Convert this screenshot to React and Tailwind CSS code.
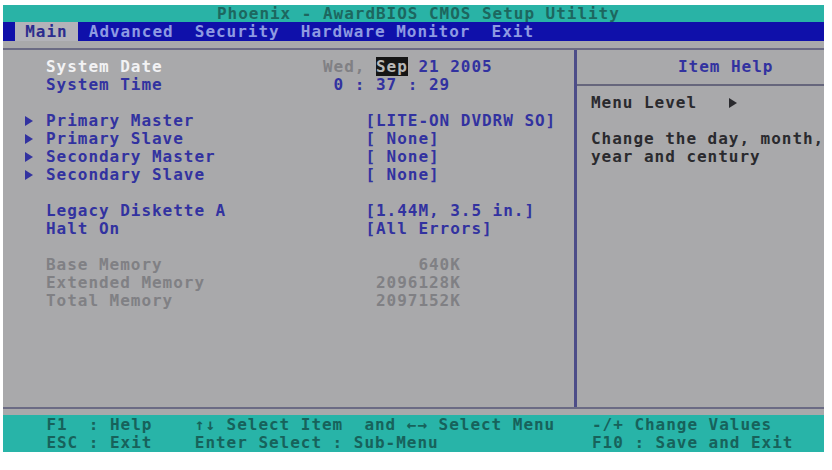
const MONO = "font-['DejaVu_Sans_Mono',monospace] font-bold text-[16px] tracking-[0.967px] leading-[18px] whitespace-pre"

const BLUE = 'text-[#3232a0]'
const GRAY = 'text-[#808084]'

function Tri({ className = 'fill-[#3232a0]' }) {
  return (
    <svg width="8" height="10" viewBox="0 0 8 10" className={className}>
      <polygon points="0,0 8,5 0,10" />
    </svg>
  )
}

function Row({ arrow, label, labelClass = BLUE, children }) {
  return (
    <div className={`flex h-[18px] items-center ${MONO}`}>
      <div className="w-[43px] pl-[22px] flex items-center">{arrow && <Tri />}</div>
      <div className={`w-[277px] ${labelClass}`}>{label}</div>
      <div>{children}</div>
    </div>
  )
}

const Gap = () => <div className="h-[18px]" />

export default function App() {
  return (
    <div className="w-[832px] h-[470px] bg-white overflow-hidden">
      <div className="ml-[3px] mt-[5px] w-[821px] h-[447px] flex flex-col bg-[#a9a9ab]">
        {/* title */}
        <div className={`h-[17px] bg-[#29b3a6] text-[#1d675f] flex items-center ${MONO}`}>
          <span className="pl-[2px] leading-[17px]">{'                    Phoenix - AwardBIOS CMOS Setup Utility'}</span>
        </div>

        {/* menu */}
        <div className={`h-[19px] bg-[#0f10aa] text-[#8e9ae2] flex items-center ${MONO}`}>
          <span className="pl-[1px]">{' '}</span>
          <span className="bg-[#b3b3b9] text-[#2c2c8e] leading-[19px]">{' Main '}</span>
          <span>{' Advanced  Security  Hardware Monitor  Exit'}</span>
        </div>

        <div className="h-[7px]" />

        {/* main box */}
        <div className="h-[361px] border-y-2 border-[#6b6b84] flex">
          <div className="w-[571px] pt-[8px]">
            <Row label="System Date" labelClass="text-[#f2f2f4]">
              <span className={GRAY}>{'Wed, '}</span>
              <span className="bg-[#161616] text-[#b8b8b8]">Sep</span>
              <span className={BLUE}>{' 21 2005'}</span>
            </Row>
            <Row label="System Time">
              <span className={BLUE}>{' 0 : 37 : 29'}</span>
            </Row>
            <Gap />
            <Row arrow label="Primary Master">
              <span className={BLUE}>{'    [LITE-ON DVDRW SO]'}</span>
            </Row>
            <Row arrow label="Primary Slave">
              <span className={BLUE}>{'    [ None]'}</span>
            </Row>
            <Row arrow label="Secondary Master">
              <span className={BLUE}>{'    [ None]'}</span>
            </Row>
            <Row arrow label="Secondary Slave">
              <span className={BLUE}>{'    [ None]'}</span>
            </Row>
            <Gap />
            <Row label="Legacy Diskette A">
              <span className={BLUE}>{'    [1.44M, 3.5 in.]'}</span>
            </Row>
            <Row label="Halt On">
              <span className={BLUE}>{'    [All Errors]'}</span>
            </Row>
            <Gap />
            <Row label="Base Memory" labelClass={GRAY}>
              <span className={GRAY}>{'         640K'}</span>
            </Row>
            <Row label="Extended Memory" labelClass={GRAY}>
              <span className={GRAY}>{'     2096128K'}</span>
            </Row>
            <Row label="Total Memory" labelClass={GRAY}>
              <span className={GRAY}>{'     2097152K'}</span>
            </Row>
          </div>

          <div className="w-[3px] bg-[#4d4d88]" />

          {/* help */}
          <div className={`flex-1 pt-[8px] overflow-hidden ${MONO}`}>
            <div className={`h-[18px] pl-[101px] ${BLUE}`}>Item Help</div>
            <div className="h-[18px] flex items-center">
              <div className="w-full h-[2px] bg-[#66667c]" />
            </div>
            <div className="h-[18px] pl-[14px] flex items-center text-[#2a2a2e]">
              <span>{'Menu Level   '}</span>
              <Tri className="fill-[#2a2a2e]" />
            </div>
            <Gap />
            <div className="pl-[14px] text-[#2a2a2e]">
              <div>Change the day, month,</div>
              <div>year and century</div>
            </div>
          </div>
        </div>

        <div className="h-[6px]" />

        {/* footer */}
        <div className={`h-[37px] bg-[#28b4a8] text-[#17625b] pt-[1px] flex ${MONO}`}>
          <div className="w-[589px] pl-[1px]">
            <div>{'    F1  : Help    ↑↓ Select Item  and ←→ Select Menu'}</div>
            <div>{'    ESC : Exit    Enter Select : Sub-Menu'}</div>
          </div>
          <div>
            <div>{'-/+ Change Values'}</div>
            <div>{'F10 : Save and Exit'}</div>
          </div>
        </div>
      </div>
    </div>
  )
}
